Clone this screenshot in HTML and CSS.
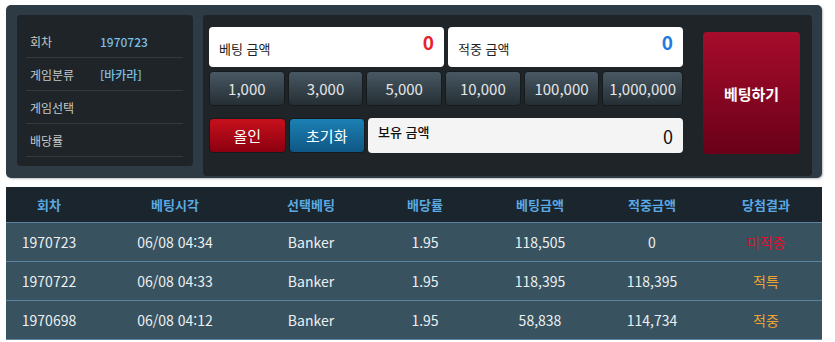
FILE: index.html
```html
<!DOCTYPE html>
<html lang="ko">
<head>
    <meta charset="UTF-8">
    <title>베팅</title>
    <link rel="stylesheet" href="styles.css">
</head>
<body>
    <div class="bet-panel">
        <div class="info">
            <div class="info-row"><span class="info-label">회차</span><span class="info-value">1970723</span></div>
            <div class="info-row"><span class="info-label">게임분류</span><span class="info-value">[바카라]</span></div>
            <div class="info-row"><span class="info-label">게임선택</span><span class="info-value"></span></div>
            <div class="info-row"><span class="info-label">배당률</span><span class="info-value"></span></div>
        </div>

        <div class="bet-box">
            <div class="bet-left">
                <div class="amount-row">
                    <div class="amount-box">
                        <span>베팅 금액</span>
                        <span class="amount red">0</span>
                    </div>
                    <div class="amount-box">
                        <span>적중 금액</span>
                        <span class="amount blue">0</span>
                    </div>
                </div>

                <div class="chips">
                    <button class="chip">1,000</button>
                    <button class="chip">3,000</button>
                    <button class="chip">5,000</button>
                    <button class="chip">10,000</button>
                    <button class="chip">100,000</button>
                    <button class="chip">1,000,000</button>
                </div>

                <div class="actions">
                    <button class="btn-allin">올인</button>
                    <button class="btn-reset">초기화</button>
                    <div class="balance">
                        <span>보유 금액</span>
                        <span class="balance-value">0</span>
                    </div>
                </div>
            </div>

            <button class="btn-bet">베팅하기</button>
        </div>
    </div>

    <table class="history">
        <thead>
            <tr>
                <th class="c1">회차</th>
                <th class="c2">베팅시각</th>
                <th class="c3">선택베팅</th>
                <th class="c4">배당률</th>
                <th class="c5">베팅금액</th>
                <th class="c6">적중금액</th>
                <th class="c7">당첨결과</th>
            </tr>
        </thead>
        <tbody>
            <tr>
                <td>1970723</td>
                <td>06/08 04:34</td>
                <td>Banker</td>
                <td>1.95</td>
                <td>118,505</td>
                <td>0</td>
                <td class="lose">미적중</td>
            </tr>
            <tr>
                <td>1970722</td>
                <td>06/08 04:33</td>
                <td>Banker</td>
                <td>1.95</td>
                <td>118,395</td>
                <td>118,395</td>
                <td class="win">적특</td>
            </tr>
            <tr>
                <td>1970698</td>
                <td>06/08 04:12</td>
                <td>Banker</td>
                <td>1.95</td>
                <td>58,838</td>
                <td>114,734</td>
                <td class="win">적중</td>
            </tr>
        </tbody>
    </table>
</body>
</html>
```
FILE: styles.css
```css
body {
    margin: 0;
    padding: 0;
    background-color: #ffffff;
    font-family: "Noto Sans CJK KR", "Noto Sans", sans-serif;
    font-size: 13px;
}

.bet-panel {
    display: flex;
    gap: 10px;
    box-sizing: border-box;
    width: 816px;
    height: 173px;
    margin: 5px 0 0 6px;
    padding: 10px 10px 2px 11px;
    background-color: #2e3a44;
    border-radius: 5px;
    box-shadow: 1px 1px 2px rgba(0, 0, 0, 0.25);
}

/* 좌측 정보 */
.info {
    box-sizing: border-box;
    width: 176px;
    height: 151px;
    padding: 10px 10px 0 9px;
    background-color: #1e2428;
    border-radius: 4px;
}

.info-row {
    display: flex;
    align-items: center;
    height: 32px;
    padding-left: 4px;
    border-bottom: 1px solid #343a3f;
    font-size: 12px;
}

.info-label {
    width: 70px;
    color: #c4c8cb;
}

.info-value {
    color: #79bfe6;
    font-weight: 500;
}

/* 베팅 영역 */
.bet-box {
    flex: 1;
    display: flex;
    gap: 20px;
    padding: 12px 12px 0 6px;
    background-color: #1e2428;
    border-radius: 4px;
}

.bet-left {
    width: 474px;
}

.amount-row {
    display: flex;
    gap: 4px;
    height: 40px;
}

.amount-box {
    flex: 1;
    display: flex;
    justify-content: space-between;
    padding: 0 10px;
    background: #ffffff;
    border-radius: 4px;
    color: #222;
    line-height: 36px;
}

.amount-box span:first-child {
    padding-top: 4px;
}

.amount {
    font-size: 19px;
    font-weight: bold;
    line-height: 30px;
}

.red {
    color: #e8212b;
}

.blue {
    color: #1d7be0;
}

.chips,
.actions {
    display: grid;
    grid-template-columns: repeat(6, 1fr);
    gap: 3px;
    height: 35px;
}

.chips {
    margin-top: 4px;
}

.actions {
    margin-top: 12px;
}

button {
    font-family: inherit;
    border: none;
    cursor: pointer;
}

.chip {
    background: linear-gradient(#485863, #252e34);
    border: 1px solid #161b1e;
    border-radius: 4px;
    color: #e4e6e8;
    font-size: 15px;
}

.btn-allin,
.btn-reset {
    border: 1px solid #161b1e;
    border-radius: 4px;
    color: #ffffff;
    font-size: 15px;
}

.btn-allin {
    background: linear-gradient(#c7101c, #8c0010);
}

.btn-reset {
    background: linear-gradient(#1c80b4, #0f5784);
}

.balance {
    grid-column: span 4;
    display: flex;
    justify-content: space-between;
    align-items: center;
    padding: 0 10px;
    background: #f4f4f4;
    border-radius: 4px;
    color: #111;
}

.balance span:first-child {
    align-self: flex-start;
    margin-top: 4px;
    font-weight: 500;
}

.balance-value {
    font-size: 18px;
}

.btn-bet {
    width: 97px;
    height: 122px;
    margin-top: 5px;
    background: linear-gradient(#a70c2c, #6a0018);
    border-radius: 4px;
    color: #ffffff;
    font-size: 15px;
    font-weight: bold;
}

/* 베팅 내역 */
.history {
    width: 816px;
    margin: 9px 0 0 6px;
    border-collapse: collapse;
    table-layout: fixed;
}

.history th,
.history td {
    padding: 0;
    text-align: center;
}

.history th {
    height: 35px;
    background-color: #1b252d;
    color: #5aa9e2;
    font-weight: bold;
}

.history td {
    height: 38px;
    background-color: #38525f;
    border-top: 1px solid #5b84a0;
    border-bottom: 1px solid #5b84a0;
    color: #ecf0f2;
    font-size: 14px;
}

.c1 { width: 86px; }
.c2 { width: 166px; }
.c3 { width: 106px; }
.c4 { width: 122px; }
.c5 { width: 108px; }
.c6 { width: 116px; }
.c7 { width: 112px; }

.lose {
    color: #e0102c !important;
}

.win {
    color: #f0a233 !important;
}
```
